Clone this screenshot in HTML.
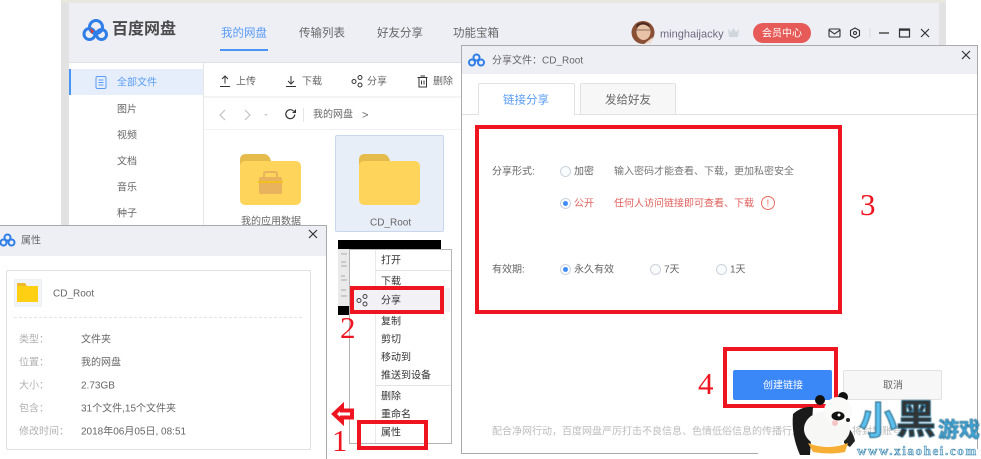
<!DOCTYPE html>
<html lang="zh"><head><meta charset="utf-8"><title>百度网盘</title>
<style>
html,body{margin:0;padding:0;background:#fff}
#p{position:relative;width:981px;height:459px;overflow:hidden;background:#fff;font-family:"Liberation Sans","Noto Sans CJK SC",sans-serif;font-size:10px;color:#666}
#p div,#p span.t{position:absolute}
.t{position:absolute;white-space:nowrap;line-height:16px;transform:translateY(-6.5px);filter:blur(.35px)}
.r{border:4px solid #ee1520;box-sizing:border-box}
.n{font-family:"Liberation Serif",serif;color:#ee1520;font-size:31px;line-height:36px;transform:translateY(-18px);filter:none}
.o{width:11px;height:11px;border:1px solid #ccd3de;border-radius:50%;box-sizing:border-box;background:#fafbfd}
.d{width:5px;height:5px;background:#3f8cf7;border-radius:50%}
svg{position:absolute;overflow:visible}
</style></head><body><div id="p">

<!-- main window backdrop -->
<div style="left:61px;top:0;width:885px;height:240px;background:#e2e2e2"></div>
<div style="left:61px;top:0;width:885px;height:3px;background:#e8e6de"></div>
<div style="left:69px;top:3px;width:870px;height:240px;background:#fff"></div>
<div style="left:69px;top:3px;width:870px;height:60px;background:#eeeff5;border-bottom:1px solid #dfe0e6;box-sizing:border-box"></div>

<svg style="left:81px;top:18px" width="28" height="24" viewBox="0 0 28 24"><g fill="none" stroke="#2f7ee8" stroke-width="3"><circle cx="15" cy="9" r="6.500"/><circle cx="8.500" cy="16" r="5.500"/><circle cx="20.500" cy="16.500" r="5"/></g><path d="M9 10l4 3-2.500 3z" fill="#e2402f"/></svg>
<span class="t" style="left:112px;top:30px;font-size:16px;font-weight:bold;color:#4a4a4a;transform:translateY(-8px)">百度网盘</span>
<span class="t" style="left:221px;top:32px;font-size:11.500px;color:#5a9cf5">我的网盘</span>
<div style="left:220px;top:49px;width:48px;height:2px;background:#4a94f5"></div>
<span class="t" style="left:299px;top:32px;font-size:11.500px">传输列表</span>
<span class="t" style="left:377px;top:32px;font-size:11.500px">好友分享</span>
<span class="t" style="left:453px;top:32px;font-size:11.500px">功能宝箱</span>

<svg style="left:631px;top:20px" width="24" height="25" viewBox="0 0 24 25"><circle cx="12" cy="12.500" r="11.500" fill="#8a5036"/><ellipse cx="12.500" cy="12" rx="7" ry="8" fill="#e8c2a6"/><path d="M5 8q7-7 14 0l-1-4-6-2-6 2z" fill="#4a2a20"/><path d="M5 10h14" stroke="#8a6a5a"/><path d="M13 24l9-7-2 6z" fill="#f0d8c8"/></svg>
<span class="t" style="left:660px;top:33px;font-size:11px;color:#6f6880">minghaijacky</span>
<svg style="left:727px;top:27px" width="13" height="11" viewBox="0 0 13 11"><path d="M1 2l3 3 2.500-4 2.500 4 3-3-1 8H2z" fill="#cfd6dc"/></svg>
<div style="left:753px;top:23px;width:58px;height:20px;border-radius:10px;background:#e65b58"></div>
<span class="t" style="left:762px;top:33px;color:#fff">会员中心</span>
<svg style="left:828px;top:28px" width="110" height="10" viewBox="0 0 110 10" fill="none" stroke="#333" stroke-width="1.100"><rect x="1" y="1" width="11" height="8" rx="1"/><path d="M1 2l5.500 4 5.500-4"/><path d="M27 0l4.500 2.500v5L27 10l-4.500-2.500v-5z"/><circle cx="27" cy="5" r="1.500"/><path d="M42 0v10" stroke="#ddd"/><path d="M51 5h10" stroke-width="1.300"/><rect x="71.500" y="1" width="10" height="8" stroke-width="1.200"/><path d="M71.500 2h10" stroke-width="1.500"/><path d="M93 1l8 8M101 1l-8 8" stroke-width="1.200"/></svg>

<!-- sidebar -->
<div style="left:203px;top:63px;width:1px;height:170px;background:#e6e6e6"></div>
<div style="left:69px;top:69px;width:134px;height:26px;background:#e6eefc"></div>
<div style="left:69px;top:69px;width:2px;height:26px;background:#4a94f5"></div>
<svg style="left:95px;top:76px" width="12" height="13" viewBox="0 0 12 13" fill="none" stroke="#5a9cf5"><rect x="1" y=".5" width="10" height="12" rx="1.500"/><path d="M3.500 4h5M3.500 6.500h5M3.500 9h5"/></svg>
<span class="t" style="left:117px;top:82px;color:#5a9cf5">全部文件</span>
<span class="t" style="left:117px;top:108.500px">图片</span>
<span class="t" style="left:117px;top:135px">视频</span>
<span class="t" style="left:117px;top:161px">文档</span>
<span class="t" style="left:117px;top:187px">音乐</span>
<span class="t" style="left:117px;top:213px">种子</span>

<!-- toolbar -->
<div style="left:204px;top:96px;width:735px;height:2px;background:#f4f4f6"></div>
<div style="left:204px;top:129px;width:735px;height:1px;background:#f1f1f3"></div>
<svg style="left:219px;top:75px" width="215" height="13" viewBox="0 0 215 13" fill="none" stroke="#333"><path d="M1 11.500h10M6 8.500V1.500M3 4l3-3 3 3"/><path d="M67 11.500h10M72 1v7.500M69 6l3 3 3-3"/><circle cx="135" cy="6.500" r="2"/><circle cx="141" cy="2.500" r="2"/><circle cx="141" cy="10" r="2"/><path d="M198.500 2.500h10M200 2.500v9.500h7.500v-9.500M201.500 1h4.500M202.500 5.500v4M205 5.500v4"/></svg>
<span class="t" style="left:236px;top:81px">上传</span>
<span class="t" style="left:302px;top:81px">下载</span>
<span class="t" style="left:367px;top:81px">分享</span>
<span class="t" style="left:433px;top:81px">删除</span>

<svg style="left:218px;top:108px" width="90" height="14" viewBox="0 0 90 14" fill="none" stroke="#bbb"><path d="M7 2L2 7l5 5M27 2l5 5-5 5"/><path d="M46 6h4l-2 2z" fill="#ccc" stroke="none"/><path d="M75.500 3a4.500 4.500 0 1 0 1.300 3.500" stroke="#333" stroke-width="1.200"/><path d="M74 5h4V1z" fill="#333" stroke="none"/><path d="M85.500 0v14" stroke="#e6e6e6"/></svg>
<span class="t" style="left:313px;top:114px">我的网盘</span>
<span class="t" style="left:362px;top:113.500px;font-size:11px">&gt;</span>

<!-- files -->
<svg style="left:240px;top:154px" width="61" height="51" viewBox="0 0 61 51"><path d="M0 6q0-6 6-6h18q5 0 7 7v4H0z" fill="#e5bb4b"/><rect y="7" width="61" height="44" rx="5" fill="#ffd45a"/><rect x="19" y="23" width="23" height="17" rx="2" fill="#e8b35c"/><path d="M24 23v-3q0-2 2-2h9q2 0 2 2v3" fill="none" stroke="#e8b35c" stroke-width="2"/><rect x="18" y="27" width="25" height="2" fill="#f4c020"/></svg>
<span class="t" style="left:241px;top:221px;color:#666">我的应用数据</span>
<div style="left:335px;top:135px;width:109px;height:97px;background:#e8eef8;border:1px solid #c9d7ec;box-sizing:border-box;border-radius:2px"></div>
<svg style="left:359px;top:154px" width="61" height="51" viewBox="0 0 61 51"><path d="M0 6q0-6 6-6h18q5 0 7 7v4H0z" fill="#e5bb4b"/><rect y="7" width="61" height="44" rx="5" fill="#ffd45a"/></svg>
<span class="t" style="left:370px;top:222px">CD_Root</span>

<!-- context menu area -->
<div style="left:326px;top:233px;width:135px;height:226px;background:#fff"></div>
<div style="left:338px;top:240px;width:103px;height:9px;background:#000"></div>
<div style="left:338px;top:249px;width:12px;height:57px;background:#eaeaea"></div>
<svg style="left:340px;top:252px" width="9" height="50" viewBox="0 0 9 50" stroke="#aaa"><path d="M1 2h6M1 10h5M1 14h6M1 24h4M1 28h6M1 38h5M1 44h6"/></svg>
<div style="left:338px;top:306px;width:12px;height:9px;background:#000"></div>
<div style="left:349px;top:249px;width:103px;height:195px;background:#fff;border:1px solid #b4b4b4;box-sizing:border-box"></div>
<div style="left:375px;top:250px;width:1px;height:193px;background:#e8e8e8"></div>
<div style="left:375px;top:270px;width:76px;height:1px;background:#e4e4e4"></div>
<div style="left:375px;top:385px;width:76px;height:1px;background:#e4e4e4"></div>
<div style="left:351px;top:288px;width:99px;height:24px;background:#f1f1f6"></div>
<svg style="left:356px;top:294px" width="12" height="13" viewBox="0 0 12 13" fill="none" stroke="#444"><circle cx="3" cy="6.500" r="2"/><circle cx="9" cy="2.500" r="2"/><circle cx="9" cy="10" r="2"/></svg>
<span class="t" style="left:381px;top:260px;color:#333">打开</span>
<span class="t" style="left:381px;top:281px;color:#333">下载</span>
<span class="t" style="left:381px;top:300px;color:#333">分享</span>
<span class="t" style="left:381px;top:321px;color:#333">复制</span>
<span class="t" style="left:381px;top:339px;color:#333">剪切</span>
<span class="t" style="left:381px;top:357px;color:#333">移动到</span>
<span class="t" style="left:381px;top:375px;color:#333">推送到设备</span>
<span class="t" style="left:381px;top:396px;color:#333">删除</span>
<span class="t" style="left:381px;top:414px;color:#333">重命名</span>
<span class="t" style="left:381px;top:432px;color:#333">属性</span>
<div class="r" style="left:350px;top:286px;width:94px;height:28px"></div>
<div class="r" style="left:357px;top:420px;width:71px;height:30px"></div>
<svg style="left:331px;top:403px" width="24" height="22" viewBox="0 0 24 22"><path d="M3 11L11 3.500v4h10v7H11v4z" fill="#fff" stroke="#ee1520" stroke-width="4"/></svg>
<span class="t n" style="left:332px;top:441px">1</span>
<span class="t n" style="left:340px;top:328px">2</span>

<!-- properties dialog -->
<div style="left:0;top:225px;width:327px;height:234px;background:#fff;border-top:1px solid #aaa;border-right:1px solid #aaa;box-sizing:border-box"></div>
<div style="left:0;top:226px;width:326px;height:30px;background:#eeeff5"></div>
<svg style="left:0;top:233px" width="15" height="14" viewBox="0 0 15 14"><g fill="none" stroke="#2f7ee8" stroke-width="2"><circle cx="7.500" cy="4.500" r="3"/><circle cx="3.500" cy="9.500" r="3"/><circle cx="11.500" cy="9.500" r="3"/></g></svg>
<span class="t" style="left:21px;top:240px">属性</span>
<svg style="left:308px;top:229px" width="10" height="10" viewBox="0 0 10 10" stroke="#333" stroke-width="1.200"><path d="M1 1l8 8M9 1l-8 8"/></svg>
<div style="left:6px;top:270px;width:305px;height:180px;border:1px solid #e0e0e0;box-sizing:border-box;border-radius:2px"></div>
<div style="left:14px;top:279px;width:28px;height:28px;border:1px solid #f0f0f0;box-sizing:border-box;background:#f1f4f8"></div>
<svg style="left:17px;top:283px" width="21" height="19" viewBox="0 0 21 19"><path d="M0 1q0-1 1-1h7l2 3H0z" fill="#eeb92c"/><rect y="3" width="21" height="16" fill="#ffcf14"/></svg>
<span class="t" style="left:53px;top:293px">CD_Root</span>
<div style="left:14px;top:317px;width:288px;border-top:1px dashed #e4e4e4"></div>
<span class="t" style="left:19px;top:339px;color:#b0b0b0">类型：</span><span class="t" style="left:81px;top:339px">文件夹</span>
<span class="t" style="left:19px;top:362px;color:#b0b0b0">位置：</span><span class="t" style="left:81px;top:362px">我的网盘</span>
<span class="t" style="left:19px;top:385px;color:#b0b0b0">大小：</span><span class="t" style="left:81px;top:385px">2.73GB</span>
<span class="t" style="left:19px;top:408px;color:#b0b0b0">包含：</span><span class="t" style="left:81px;top:408px">31个文件,15个文件夹</span>
<span class="t" style="left:19px;top:431px;color:#b0b0b0">修改时间：</span><span class="t" style="left:81px;top:431px">2018年06月05日, 08:51</span>

<!-- share dialog -->
<div style="left:461px;top:45px;width:517px;height:409px;background:#fff;border:1px solid #aaa;box-sizing:border-box"></div>
<div style="left:462px;top:46px;width:515px;height:28px;background:#eeeff5"></div>
<svg style="left:468px;top:53px" width="17" height="14" viewBox="0 0 17 14"><g fill="none" stroke="#2f7ee8" stroke-width="2"><circle cx="8.500" cy="4.500" r="3"/><circle cx="4" cy="9.500" r="3"/><circle cx="13" cy="9.500" r="3"/></g></svg>
<span class="t" style="left:492px;top:60px">分享文件：CD_Root</span>
<svg style="left:961px;top:50px" width="10" height="10" viewBox="0 0 10 10" stroke="#333" stroke-width="1.200"><path d="M1 1l8 8M9 1l-8 8"/></svg>
<div style="left:462px;top:114px;width:515px;height:1px;background:#e2e2e2"></div>
<div style="left:478px;top:83px;width:97px;height:32px;background:#fff;border:1px solid #e2e2e2;border-bottom:none;box-sizing:border-box;border-radius:2px 2px 0 0"></div>
<div style="left:580px;top:83px;width:96px;height:31px;background:#f7f7f7;border:1px solid #e2e2e2;border-bottom:none;box-sizing:border-box;border-radius:2px 2px 0 0"></div>
<span class="t" style="left:503px;top:99px;font-size:11.500px;color:#5a9cf5">链接分享</span>
<span class="t" style="left:605px;top:99px;font-size:11.500px">发给好友</span>

<div class="r" style="left:475px;top:125px;width:367px;height:189px"></div>
<span class="t n" style="left:860px;top:205px">3</span>

<span class="t" style="left:492px;top:171px">分享形式:</span>
<div class="o" style="left:560px;top:166px"></div>
<span class="t" style="left:574px;top:171px">加密</span>
<span class="t" style="left:614px;top:171px;color:#777">输入密码才能查看、下载，更加私密安全</span>
<div class="o" style="left:560px;top:198px"></div>
<div class="d" style="left:563px;top:201px"></div>
<span class="t" style="left:574px;top:203px;color:#e2605c">公开</span>
<span class="t" style="left:614px;top:203px;color:#e2605c">任何人访问链接即可查看、下载</span>
<div style="left:761px;top:196px;width:14px;height:14px;border:1px solid #ea6a60;border-radius:50%;box-sizing:border-box"></div>
<span class="t" style="left:766.500px;top:203px;color:#ea6a60">!</span>

<span class="t" style="left:492px;top:269px">有效期:</span>
<div class="o" style="left:560px;top:264px"></div>
<div class="d" style="left:563px;top:267px"></div>
<span class="t" style="left:574px;top:269px">永久有效</span>
<div class="o" style="left:650px;top:264px"></div>
<span class="t" style="left:664px;top:269px">7天</span>
<div class="o" style="left:716px;top:264px"></div>
<span class="t" style="left:730px;top:269px">1天</span>

<div class="r" style="left:723px;top:347px;width:115px;height:61px"></div>
<div style="left:733px;top:370px;width:99px;height:30px;background:#3a87f7;border-radius:2px"></div>
<span class="t" style="left:763px;top:385px;color:#fff">创建链接</span>
<div style="left:843px;top:370px;width:99px;height:30px;background:#f7f7f7;border:1px solid #e2e2e2;box-sizing:border-box;border-radius:2px"></div>
<span class="t" style="left:883px;top:385px">取消</span>
<span class="t n" style="left:698px;top:384px">4</span>
<span class="t" style="left:492px;top:431px;color:#bcbcbc">配合净网行动，百度网盘严厉打击不良信息、色情低俗信息的传播行为，如发现，将封禁账号。</span>

<!-- watermark -->
<div style="left:758px;top:449px;width:223px;height:10px;background:#fff"></div>
<svg style="left:780px;top:390px" width="100" height="69" viewBox="0 0 100 69">
<path d="M13 24q9-8 20-7l-3 48H20q-9-20-7-41z" fill="#1a1a1a"/>
<circle cx="40" cy="10" r="5" fill="#111"/><circle cx="63" cy="7" r="5" fill="#111"/>
<path d="M64 33q9 8 11 18l-5 6-6-4z" fill="#222"/>
<path d="M28 53q20 8 40 0l-3 9q-14 3-32 0z" fill="#f6ae35"/>
<ellipse cx="47" cy="39" rx="23" ry="18" fill="#f7f7f5"/>
<ellipse cx="58" cy="21" rx="14" ry="14" fill="#fafaf8"/>
<ellipse cx="58" cy="26" rx="6.500" ry="4.500" fill="#111"/><ellipse cx="68" cy="30" rx="2" ry="2" fill="#222"/>
<circle cx="59" cy="25" r="1.500" fill="#fff"/><circle cx="55" cy="33" r="3" fill="#f6c6c6"/>
</svg>
<span class="t" style="left:859px;top:422px;font-size:38px;line-height:44px;transform:translateY(-22px);font-weight:bold;color:#5cc0ee;-webkit-text-stroke:1px #1d5f80;letter-spacing:-1px;filter:blur(.4px)">小</span>
<span class="t" style="left:896px;top:420px;font-size:40px;line-height:44px;transform:translateY(-22px);font-weight:bold;color:#333;-webkit-text-stroke:1px #1d5f80;filter:blur(.4px)">黑</span>
<span class="t" style="left:938px;top:431px;font-size:21px;line-height:24px;transform:translateY(-12px);font-weight:bold;color:#3fa8dc;-webkit-text-stroke:.6px #185a7a;filter:blur(.4px)">游戏</span>
<span class="t" style="left:857px;top:451px;font-size:13px;line-height:12px;transform:translateY(-6px);font-weight:bold;font-family:'Liberation Serif',serif;letter-spacing:1.600px;color:#bfe4f7;-webkit-text-stroke:.5px #3a7fa5">www.xiaohei.com</span>
</div></body></html>
